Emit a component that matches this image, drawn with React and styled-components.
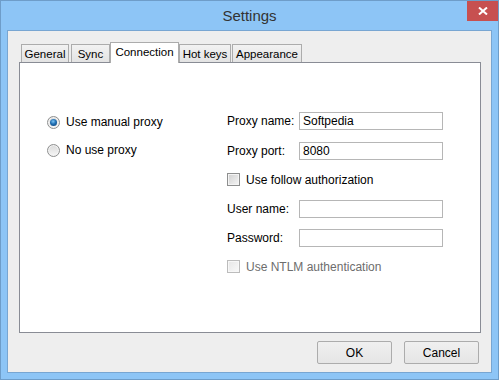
import React from "react";
import styled, { createGlobalStyle, css } from "styled-components";

const Global = createGlobalStyle`
  html, body { margin: 0; padding: 0; background: #fff; }
  body { font-family: "Liberation Sans", Arial, sans-serif; }
  * { box-sizing: border-box; }
`;

const Window = styled.div`
  width: 499px;
  height: 380px;
  background: #8dc5f6;
  border: 1px solid #6e9dc9;
  display: flex;
  flex-direction: column;
  padding: 0 6px 6px;
`;

const TitleBar = styled.div`
  height: 29px;
  display: grid;
  grid-template-columns: 1fr auto 1fr;
  align-items: start;
`;

const Title = styled.div`
  grid-column: 2;
  font-size: 15px;
  color: #333;
  line-height: 15px;
  margin-top: 7px;
`;

const CloseButton = styled.div`
  grid-column: 3;
  justify-self: end;
  width: 31px;
  height: 20px;
  margin-right: -6px;
  background: #c75050;
  display: flex;
  align-items: center;
  justify-content: center;
`;

const Client = styled.div`
  flex: 1;
  background: #eeeeee;
  border: 1px solid #78a6d2;
  padding: 11px 10px 8px 11px;
  display: flex;
  flex-direction: column;
`;

const TabRow = styled.div`
  height: 20px;
  display: flex;
  align-items: flex-end;
  padding-left: 2px;
  position: relative;
  z-index: 1;
`;

const Tab = styled.div`
  width: ${(p) => p.$w}px;
  margin-right: ${(p) => p.$gap || 0}px;
  height: 18px;
  border: 1px solid #acacac;
  border-bottom: none;
  background: linear-gradient(#f2f2f2, #e3e3e3);
  font-size: 11.5px;
  color: #000;
  display: flex;
  align-items: center;
  justify-content: center;
  padding-top: 1px;
  white-space: nowrap;
  ${(p) =>
    p.$active &&
    css`
      height: 21px;
      margin-bottom: -1px;
      background: #fff;
      padding-top: 0;
      padding-bottom: 2px;
    `}
`;

const Panel = styled.div`
  height: 271px;
  background: #fff;
  border: 1px solid #898c95;
  display: flex;
  padding: 49px 0 0 27px;
`;

const LeftCol = styled.div`
  width: 180px;
  display: flex;
  flex-direction: column;
  gap: 8px;
`;

const RadioRow = styled.label`
  height: 20px;
  display: flex;
  align-items: center;
  gap: 6px;
  font-size: 12px;
  color: #000;
`;

const Radio = styled.span`
  width: 13px;
  height: 13px;
  border-radius: 50%;
  border: 1px solid #8e8f8f;
  background: linear-gradient(#d9d9d9, #f7f7f7);
  display: flex;
  align-items: center;
  justify-content: center;
  box-shadow: inset 0 0 0 1px #f3f3f3;
  &::after {
    content: "";
    display: ${(p) => (p.$checked ? "block" : "none")};
    width: 7px;
    height: 7px;
    border-radius: 50%;
    background: radial-gradient(circle at 45% 35%, #7cc4f5 0%, #1f6fb3 45%, #0b3a70 100%);
  }
`;

const Form = styled.div`
  display: grid;
  grid-template-columns: 72px 144px;
  grid-template-rows: 30px 31px 27px 29px 31px auto;
  align-items: start;
`;

const Label = styled.div`
  height: 18px;
  display: flex;
  align-items: center;
  font-size: 12px;
  color: #000;
  white-space: nowrap;
`;

const Input = styled.div`
  height: 18px;
  border: 1px solid #b6b6b6;
  background: #fff;
  font-size: 12px;
  color: #000;
  padding-left: 3px;
  display: flex;
  align-items: center;
`;

const CheckRow = styled.div`
  grid-column: 1 / span 2;
  height: 13px;
  display: flex;
  align-items: center;
  gap: 6px;
  font-size: 12px;
  color: ${(p) => (p.$disabled ? "#6d6d6d" : "#000")};
  white-space: nowrap;
`;

const Check = styled.span`
  width: 13px;
  height: 13px;
  flex: none;
  border: 1px solid ${(p) => (p.$disabled ? "#bcbcbc" : "#8e8f8f")};
  box-shadow: inset 0 0 0 1px ${(p) => (p.$disabled ? "#f7f7f7" : "#f4f4f4")};
  background: ${(p) =>
    p.$disabled
      ? "linear-gradient(135deg, #e6e6e6, #f9f9f9)"
      : "linear-gradient(135deg, #cfcfcf, #f6f6f6)"};
`;

const ButtonBar = styled.div`
  display: flex;
  justify-content: flex-end;
  gap: 12px;
  margin-top: 8px;
  padding-right: 2px;
`;

const Button = styled.div`
  width: 75px;
  height: 23px;
  border: 1px solid #acacac;
  border-radius: 2px;
  background: linear-gradient(#f0f0f0, #e5e5e5);
  font-size: 12px;
  color: #000;
  display: flex;
  align-items: center;
  justify-content: center;
`;

const tabs = [
  { name: "General", w: 48, gap: 2 },
  { name: "Sync", w: 39 },
  { name: "Connection", w: 69, active: true },
  { name: "Hot keys", w: 52, gap: 1 },
  { name: "Appearance", w: 70 },
];

export default function App() {
  return (
    <>
      <Global />
      <Window>
        <TitleBar>
          <Title>Settings</Title>
          <CloseButton>
            <svg width="10" height="8" viewBox="0 0 10 8">
              <path d="M1 0.5 L9 7.5 M9 0.5 L1 7.5" stroke="#fff" strokeWidth="2" />
            </svg>
          </CloseButton>
        </TitleBar>
        <Client>
          <TabRow>
            {tabs.map((t) => (
              <Tab key={t.name} $w={t.w} $gap={t.gap} $active={t.active}>
                {t.name}
              </Tab>
            ))}
          </TabRow>
          <Panel>
            <LeftCol>
              <RadioRow>
                <Radio $checked />
                Use manual proxy
              </RadioRow>
              <RadioRow>
                <Radio />
                No use proxy
              </RadioRow>
            </LeftCol>
            <Form>
              <Label>Proxy name:</Label>
              <Input>Softpedia</Input>
              <Label>Proxy port:</Label>
              <Input>8080</Input>
              <CheckRow>
                <Check />
                Use follow authorization
              </CheckRow>
              <Label>User name:</Label>
              <Input />
              <Label>Password:</Label>
              <Input />
              <CheckRow $disabled>
                <Check $disabled />
                Use NTLM authentication
              </CheckRow>
            </Form>
          </Panel>
          <ButtonBar>
            <Button>OK</Button>
            <Button>Cancel</Button>
          </ButtonBar>
        </Client>
      </Window>
    </>
  );
}
